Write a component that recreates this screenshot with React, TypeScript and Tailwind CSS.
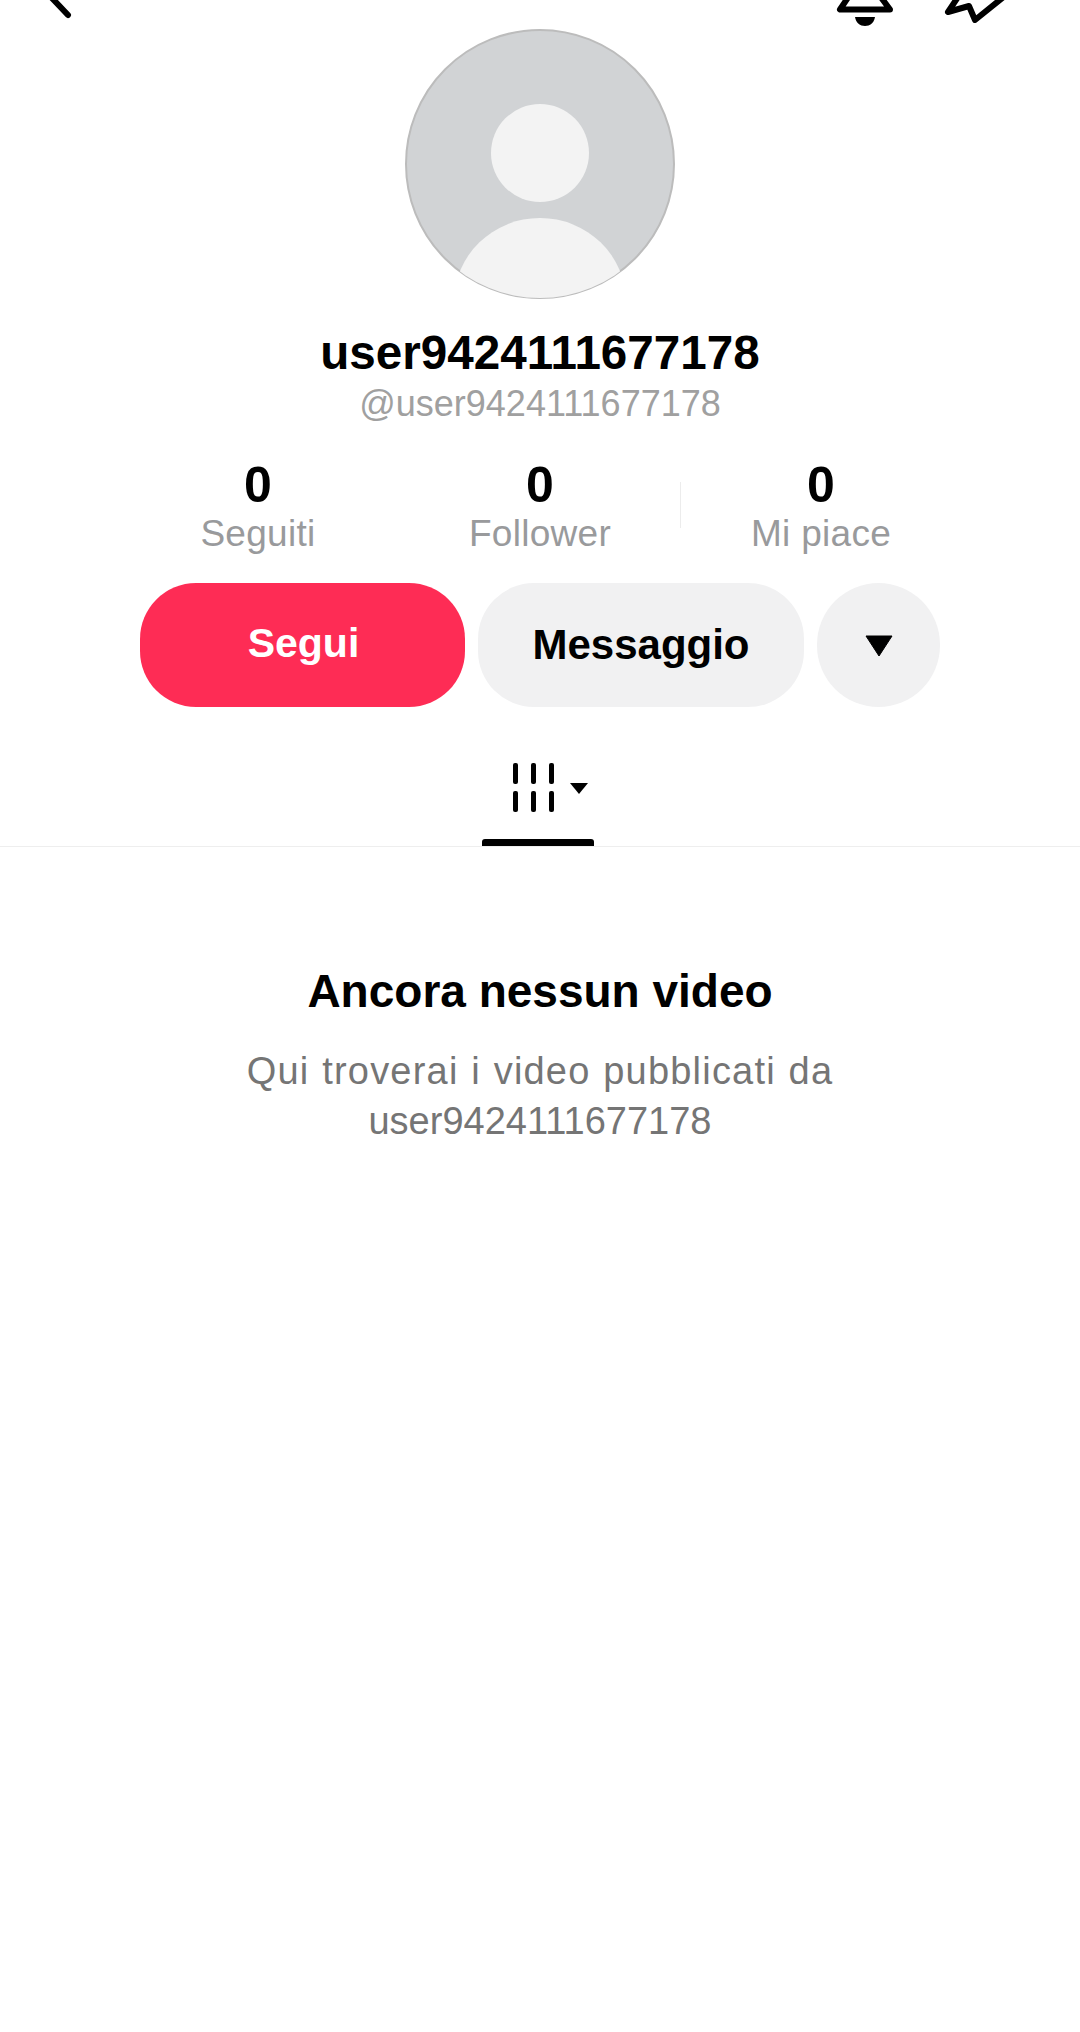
const font = "font-['Liberation_Sans',Arial,sans-serif]";

function Stat({ label }: { label: string }) {
  return (
    <div className="w-[282px] flex flex-col items-center">
      <div className="text-[50px] leading-[50px] font-bold text-black">0</div>
      <div className="mt-[3px] text-[37px] leading-[42px] tracking-[0.3px] text-[#999a9c]">{label}</div>
    </div>
  );
}

export default function App() {
  return (
    <main className={`${font} w-[1080px] min-h-[2032px] bg-white overflow-hidden`}>
      {/* top bar, mostly scrolled off */}
      <header className="h-[29px] flex justify-between pl-[46px] pr-[70px]">
        <svg width="30" height="29" viewBox="46 0 30 29" fill="none" stroke="#000" strokeWidth="6" strokeLinecap="round">
          <path d="M50 -4L68 15" />
        </svg>
        <div className="flex gap-[40px]">
          <svg width="70" height="29" viewBox="830 0 70 29" fill="none">
            <path d="M849 -4L840 9.5H890L880 -4" stroke="#000" strokeWidth="6" strokeLinejoin="round" strokeLinecap="round" />
            <path d="M855 17H875C874 23 870 26 865 26C860 26 856 23 855 17Z" fill="#000" />
          </svg>
          <svg width="70" height="29" viewBox="940 0 70 29" fill="none">
            <path d="M958 -3L948 12L969 6L975 20L1006 -5" stroke="#000" strokeWidth="6" strokeLinejoin="round" strokeLinecap="round" />
          </svg>
        </div>
      </header>

      <section className="flex flex-col items-center">
        <svg width="270" height="270" viewBox="405 29 270 270">
          <defs>
            <clipPath id="avatar-clip">
              <circle cx="540" cy="164" r="134" />
            </clipPath>
          </defs>
          <circle cx="540" cy="164" r="134" fill="#d1d3d5" stroke="#bcbcbc" strokeWidth="2" />
          <circle cx="540" cy="153" r="49" fill="#f3f3f3" />
          <ellipse cx="540" cy="302" rx="86" ry="84" fill="#f3f3f3" clipPath="url(#avatar-clip)" />
        </svg>
        <h1 className="mt-[26px] text-[47.6px] leading-[56px] font-bold text-black">user9424111677178</h1>
        <p className="mt-[3px] text-[36px] leading-[40px] text-[#a0a0a0]">@user9424111677178</p>
      </section>

      <section className="mt-[36px] ml-[117px] flex">
        <Stat label="Seguiti" />
        <Stat label="Follower" />
        <div className="w-px h-[46px] mt-[22px] -mx-px bg-[#ececec]" />
        <Stat label="Mi piace" />
      </section>

      <section className="mt-[28px] pl-[140px] flex gap-[13px]">
        <button className="w-[325px] h-[124px] pl-[2px] pb-[2px] rounded-[56px] bg-[#fe2c55] text-white text-[41px] font-bold">Segui</button>
        <button className="w-[326px] h-[124px] pb-[2px] rounded-[56px] bg-[#f1f1f2] text-black text-[42px] font-bold">Messaggio</button>
        <button className="w-[123px] h-[124px] rounded-full bg-[#f1f1f2] flex items-center justify-center">
          <svg className="mt-[2px]" width="28" height="22" viewBox="0 0 28 22">
            <path d="M1 1H27L14 21Z" fill="#000" stroke="#000" strokeLinejoin="round" />
          </svg>
        </button>
      </section>

      <nav className="mt-[56px] border-b border-[#eeeeee]">
        <div className="ml-[482px] w-[112px]">
          <svg className="block ml-[31px]" width="75" height="50" viewBox="0 0 75 50" fill="#000">
            <rect x="0" y="0" width="5" height="21" rx="2" />
            <rect x="18" y="0" width="5" height="21" rx="2" />
            <rect x="36" y="0" width="5" height="21" rx="2" />
            <rect x="0" y="28" width="5" height="21" rx="2" />
            <rect x="18" y="28" width="5" height="21" rx="2" />
            <rect x="36" y="28" width="5" height="21" rx="2" />
            <path d="M57 20H75L66 31Z" />
          </svg>
          <div className="mt-[26px] h-[7px] rounded-t-[3px] bg-black" />
        </div>
      </nav>

      <section className="mt-[116px] flex flex-col items-center text-center">
        <h2 className="text-[46px] leading-[56px] font-bold text-black">Ancora nessun video</h2>
        <p className="mt-[27px] text-[38px] leading-[50px] text-[#757575]">
          <span className="tracking-[1.2px] [word-spacing:1px]">Qui troverai i video pubblicati da</span>
          <br />
          <span>user9424111677178</span>
        </p>
      </section>
    </main>
  );
}
